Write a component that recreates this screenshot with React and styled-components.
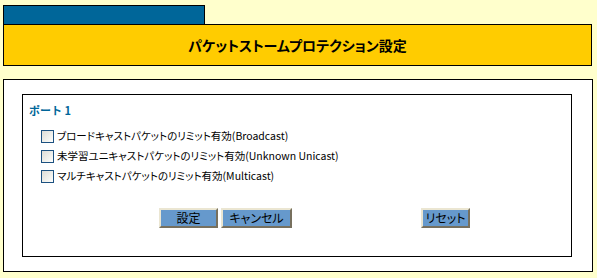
import React from 'react';
import styled, { createGlobalStyle } from 'styled-components';

const GlobalStyle = createGlobalStyle`
  html, body {
    margin: 0;
    padding: 0;
    background: #ffffcc;
  }
  body {
    font-family: "Noto Sans CJK JP", "Liberation Sans", sans-serif;
    color: #000;
  }
`;

const Page = styled.div`
  padding: 5px 0 0 3px;
  width: 590px;
`;

const Tab = styled.div`
  width: 200px;
  height: 18px;
  background: #006699;
  border: 1px solid #000;
  border-bottom: none;
`;

const Header = styled.div`
  width: 587px;
  height: 40px;
  background: #ffcc00;
  border: 1px solid #000;
  display: flex;
  align-items: center;
  justify-content: center;
`;

const Title = styled.h1`
  margin: 0;
  font-size: 14px;
  font-weight: bold;
  font-feature-settings: "palt";
`;

const Panel = styled.div`
  margin-top: 13px;
  width: 570px;
  height: 177px;
  background: #fff;
  border: 1px solid #000;
  padding: 14px 0 0 18px;
`;

const Inner = styled.div`
  width: 542px;
  height: 161px;
  border: 1px solid #000;
  padding: 0 0 0 6px;
`;

const PortLabel = styled.div`
  margin-top: 8px;
  font-size: 11px;
  font-weight: bold;
  color: #006699;
  line-height: 14px;
`;

const OptionList = styled.div`
  margin-top: 12px;
  padding-left: 12px;
  display: flex;
  flex-direction: column;
  gap: 6px;
`;

const Option = styled.label`
  display: flex;
  align-items: center;
  gap: 3px;
  font-size: 10.5px;
  line-height: 14px;
  height: 14px;
  font-feature-settings: "palt";
`;

const Box = styled.span`
  width: 11px;
  height: 11px;
  border: 1px solid #1c5180;
  background: linear-gradient(135deg, #dcdcd6 0%, #f4f4f0 70%, #fff 100%);
  flex: none;
`;

const ButtonRow = styled.div`
  margin-top: 25px;
  padding-left: 130px;
  display: flex;
  align-items: center;
`;

const Button = styled.button`
  height: 20px;
  width: ${({ w }) => w}px;
  margin-left: ${({ gap }) => gap || 0}px;
  padding: 0;
  background: #6699cc;
  border: 2px solid;
  border-color: #ebe6d2 #77705e #77705e #ebe6d2;
  font-family: "Noto Sans CJK JP", sans-serif;
  font-size: 12px;
  line-height: 16px;
  color: #000;
  font-feature-settings: "palt";
`;

const options = [
  'ブロードキャストパケットのリミット有効(Broadcast)',
  '未学習ユニキャストパケットのリミット有効(Unknown Unicast)',
  'マルチキャストパケットのリミット有効(Multicast)',
];

export default function App() {
  return (
    <>
      <GlobalStyle />
      <Page>
        <Tab />
        <Header>
          <Title>パケットストームプロテクション設定</Title>
        </Header>
        <Panel>
          <Inner>
            <PortLabel>ポート 1</PortLabel>
            <OptionList>
              {options.map((o) => (
                <Option key={o}>
                  <Box />
                  {o}
                </Option>
              ))}
            </OptionList>
            <ButtonRow>
              <Button w={59}>設定</Button>
              <Button w={71} gap={3}>キャンセル</Button>
              <Button w={49} gap={129}>リセット</Button>
            </ButtonRow>
          </Inner>
        </Panel>
      </Page>
    </>
  );
}
